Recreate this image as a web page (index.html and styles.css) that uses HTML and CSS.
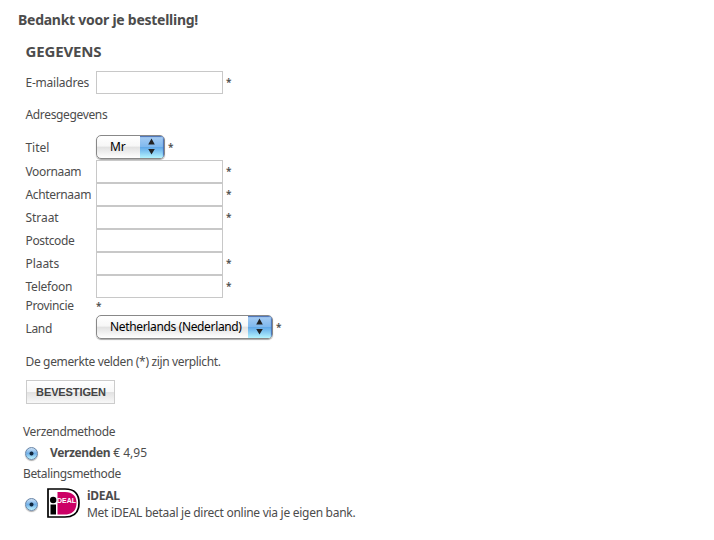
FILE: index.html
```html
<!DOCTYPE html>
<html lang="nl">
<head>
<meta charset="utf-8">
<title>Bestelling</title>
<link rel="stylesheet" href="styles.css">
</head>
<body>
<h1>Bedankt voor je bestelling!</h1>
<form class="details">
  <h2>GEGEVENS</h2>
  <div class="row"><label class="loose">E-mailadres</label><input type="text"><i>*</i></div>
  <p class="section">Adresgegevens</p>
  <div class="row select-row"><label class="wide">Titel</label><div class="select short"><span class="value">Mr</span><span class="cap"><svg viewBox="0 0 24 23"><path d="M8.200 8.500L11.500 2.500 14.800 8.500zM8.200 13h6.600l-3.300 5.500z"/></svg></span></div><i>*</i></div>
  <div class="row"><label>Voornaam</label><input type="text"><i>*</i></div>
  <div class="row"><label>Achternaam</label><input type="text"><i>*</i></div>
  <div class="row"><label class="wide">Straat</label><input type="text"><i>*</i></div>
  <div class="row"><label>Postcode</label><input type="text"></div>
  <div class="row"><label class="wide">Plaats</label><input type="text"><i>*</i></div>
  <div class="row"><label class="loose">Telefoon</label><input type="text"><i>*</i></div>
  <div class="row province"><label>Provincie</label><i>*</i></div>
  <div class="row select-row country"><label>Land</label><div class="select long"><span class="value">Netherlands (Nederland)</span><span class="cap"><svg viewBox="0 0 24 23"><path d="M8.200 8.500L11.500 2.500 14.800 8.500zM8.200 13h6.600l-3.300 5.500z"/></svg></span></div><i>*</i></div>
  <p class="note">De gemerkte velden (*) zijn verplicht.</p>
  <button type="button">BEVESTIGEN</button>
</form>
<section class="methods">
  <p>Verzendmethode</p>
  <div class="option shipping"><span class="radio"></span><span class="price"><b>Verzenden</b> € 4,95</span></div>
  <p>Betalingsmethode</p>
  <div class="option payment"><span class="radio"></span>
    <svg class="ideal" viewBox="0 0 33 30"><path d="M1 1H18C27 1 32 6 32 15S27 29 18 29H1z" fill="#fff" stroke="#000" stroke-width="1.700"/><path d="M10.500 4H18C25.500 4 29.500 8 29.500 15S25.500 26.500 18 26.500H10.500z" fill="#cc0066"/><circle cx="6.200" cy="12" r="3.200"/><path d="M3.500 16.500h5.500v10h-5.500z"/><text x="10" y="14.500" textLength="19" lengthAdjust="spacingAndGlyphs">DEAL</text></svg>
    <div class="desc"><b>iDEAL</b><span>Met iDEAL betaal je direct online via je eigen bank.</span></div>
  </div>
</section>
</body>
</html>
```
FILE: styles.css
```css
* { box-sizing: border-box; }
body { margin: 0; padding: 11px 0 0 18px; background: #fff; color: #4c4c4c; font: 12px/16px "Noto Sans", sans-serif; letter-spacing: -.35px; }
h1, h2, p { margin: 0; }
h1 { font-size: 14px; line-height: 18px; letter-spacing: -.26px; }
h2 { font-size: 15px; line-height: 18px; margin: 13px 0 11px; letter-spacing: -.15px; }
.details { padding-left: 7.5px; }
.row { display: flex; align-items: center; height: 23px; }
label { width: 70.5px; flex: none; white-space: nowrap; padding-top: 1px; }
.loose { letter-spacing: -.22px; }
.wide { letter-spacing: -.05px; }
input { width: 127px; height: 23px; border: 1px solid #c8c8c8; margin: 0; padding: 0 4px; background: #fff; }
.row i { font-style: normal; font-weight: 600; font-size: 10px; margin-left: 3px; padding-bottom: 1px; }
.section { margin: 12px 0 11px; padding-top: 1px; }
.select-row { height: 26px; }
.select { display: flex; height: 24px; margin-top: -1px; border: 1px solid #888; border-radius: 5px; overflow: hidden; color: #000; background: linear-gradient(#fff, #f7f7f7 45%, #e2e2e2 52%, #fff); box-shadow: 0 1px 1px #aaa; }
.short { width: 69px; }
.long { width: 177px; }
.select + i { margin-left: 3px; }
.value { flex: 1; padding-left: 13px; line-height: 22px; white-space: nowrap; }
.short .value { letter-spacing: -.1px; }
.cap { width: 24px; flex: none; background: linear-gradient(#a9cdf3, #80b9ee 48%, #62a9e8 52%, #b4f4ff); box-shadow: inset -1px 1px 1px #4a70b4; }
.cap svg { display: block; width: 24px; height: 23px; fill: #222; }
.province { height: 16px; }
.province label { padding-top: 0; }
.province i { margin-left: 0; }
.country label { padding-top: 3px; }
.note { margin: 13px 0 11px; position: relative; top: .5px; }
button { display: block; width: 89px; height: 24px; margin: 0 0 0 .5px; padding: 0 0 0 1px; border: 1px solid #ccc; background: linear-gradient(#fff, #f8f8f8 48%, #e2e2e2 52%, #f8f8f8); color: #444; font: bold 11px "Liberation Sans", sans-serif; letter-spacing: -.1px; }
.methods { padding: 20px 0 0 5px; }
.option { display: flex; align-items: center; }
.radio { width: 13px; height: 13px; margin-left: 2px; flex: none; border: 1px solid #6785a8; border-radius: 50%; background: radial-gradient(circle, #102840 0 1.6px, transparent 2.4px), linear-gradient(#cfe2f5, #70b0e8 50%, #c0f4ff); box-shadow: 0 1px 1px #aaa; }
.shipping { height: 26px; gap: 12px; }
.price { letter-spacing: 0; }
.price b { letter-spacing: -.38px; }
.payment { height: 36px; margin-top: 4px; }
.ideal { width: 33px; height: 30px; margin: -3px 7px 0 9px; flex: none; }
.ideal text { font: bold 7.5px "Liberation Sans", sans-serif; fill: #fff; letter-spacing: 0; }
.desc b, .desc > span { display: block; line-height: 17px; letter-spacing: -.28px; }
```
